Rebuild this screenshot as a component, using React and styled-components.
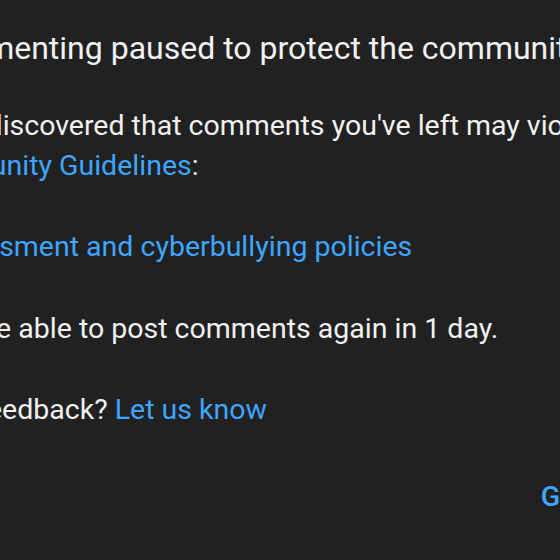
import React from "react";
import styled, { createGlobalStyle } from "styled-components";

const GlobalStyle = createGlobalStyle`
  html, body {
    margin: 0;
    padding: 0;
    background: #212121;
  }
`;

const Viewport = styled.div`
  width: 560px;
  height: 560px;
  overflow: hidden;
  background: #212121;
`;

const Dialog = styled.div`
  width: 840px;
  margin-left: -94px;
  padding-top: 28px;
  font-family: Roboto, "Noto Sans", Arial, sans-serif;
  color: #f1f1f1;
`;

const Title = styled.h2`
  margin: 0 0 38px 0;
  padding-left: 13px;
  font-size: 32px;
  font-weight: 400;
  line-height: 40px;
  white-space: nowrap;
`;

const Paragraph = styled.p`
  margin: 0 0 41px 0;
  font-size: 28.5px;
  line-height: 40px;
`;

const PolicyList = styled.ul`
  margin: 0 0 42px 0;
  padding-left: 18px;
  font-size: 28.5px;
  line-height: 40px;
  list-style: disc;
`;

const Link = styled.a`
  color: #3ea6ff;
  text-decoration: none;
`;

const Actions = styled.div`
  display: flex;
  justify-content: flex-end;
  margin-top: 47px;
  padding-right: 118px;
`;

const Button = styled.button`
  border: none;
  background: transparent;
  color: #3ea6ff;
  font-family: Roboto, Arial, sans-serif;
  font-size: 28.5px;
  font-weight: 500;
  line-height: 40px;
  padding: 0;
  cursor: pointer;
`;

export default function App() {
  return (
    <Viewport>
      <GlobalStyle />
      <Dialog>
        <Title>Commenting paused to protect the community</Title>
        <Paragraph>
          We've discovered that comments you've left may violate our{" "}
          <Link href="#">Community Guidelines</Link>:
        </Paragraph>
        <PolicyList>
          <li>
            <Link href="#">Harassment and cyberbullying policies</Link>
          </li>
        </PolicyList>
        <Paragraph>You'll be able to post comments again in 1 day.</Paragraph>
        <Paragraph>
          Have feedback? <Link href="#">Let us know</Link>
        </Paragraph>
        <Actions>
          <Button>GOT IT</Button>
        </Actions>
      </Dialog>
    </Viewport>
  );
}
